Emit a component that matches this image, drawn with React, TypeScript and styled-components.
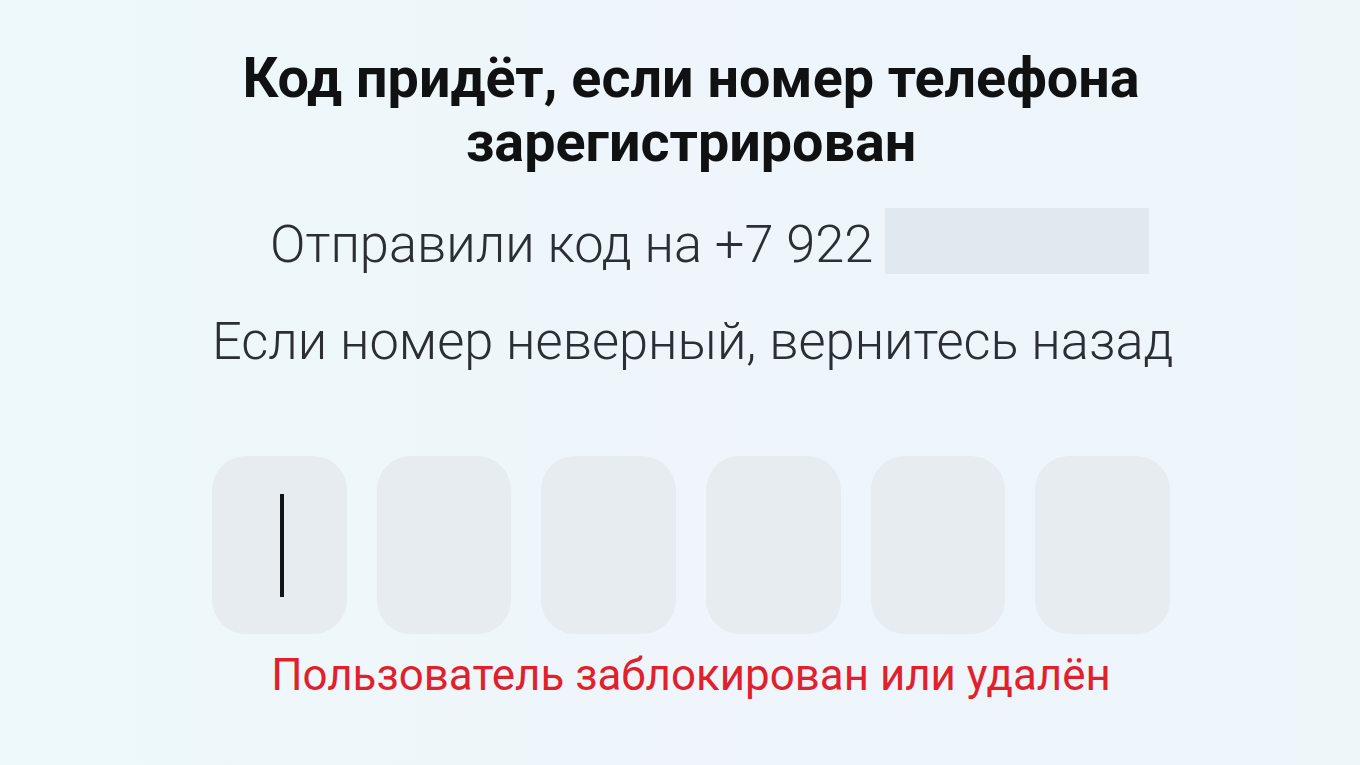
import styled, { createGlobalStyle } from "styled-components";

const GlobalStyle = createGlobalStyle`
  html, body {
    margin: 0;
    padding: 0;
    background: #eef6fa;
  }
  body {
    font-family: Roboto, "Liberation Sans", sans-serif;
  }
`

const Screen = styled.div`
  height: 765px;
  overflow: hidden;
  background: linear-gradient(90deg, #edf9fb 0%, #eff5fa 50%, #eef6fa 100%);
`

const Column = styled.main`
  width: 958px;
  margin-left: 212px;
  padding-top: 46px;
  display: flex;
  flex-direction: column;
  align-items: center;
`

const Title = styled.h1`
  margin: 0;
  font-size: 55.7px;
  line-height: 64px;
  font-weight: 700;
  color: #101112;
  text-align: center;
  white-space: nowrap;
`

const InfoLine = styled.div<{ $top: number; $indent?: number }>`
  align-self: stretch;
  display: flex;
  align-items: flex-start;
  gap: 12px;
  margin-top: ${({$top}) => $top}px;
  padding-left: ${({$indent}) => $indent ?? 0}px;
`

const InfoText = styled.p<{ $shift?: number }>`
  margin: ${({$shift}) => $shift ?? 0}px 0 0;
  font-size: 52.4px;
  line-height: 61px;
  font-weight: 300;
  color: #2b2f34;
  white-space: nowrap;
`

const Hidden = styled.span`
  width: 264px;
  height: 66px;
  background: #e1e9f0;
`

const CodeGrid = styled.div`
  align-self: stretch;
  display: grid;
  grid-template-columns: repeat(6, 1fr);
  gap: 30px;
  margin-top: 84px;
`

const Cell = styled.div`
  height: 178px;
  border-radius: 34px;
  background: #e6ecef;
  display: flex;
  align-items: center;
  justify-content: center;
`

const Caret = styled.span`
  width: 4px;
  height: 103px;
  margin-left: 6px;
  background: #121416;
`

const ErrorText = styled.p`
  margin: 15px 0 0;
  font-size: 43.9px;
  line-height: 53px;
  font-weight: 400;
  color: #e21f2d;
  white-space: nowrap;
`

function App() {
    const cells = [0, 1, 2, 3, 4, 5];
    return (
        <>
            <GlobalStyle/>
            <Screen>
                <Column>
                    <Title>Код придёт, если номер телефона<br/>зарегистрирован</Title>
                    <InfoLine $top={34} $indent={58}>
                        <InfoText $shift={6}>Отправили код на +7 922</InfoText>
                        <Hidden/>
                    </InfoLine>
                    <InfoLine $top={36}>
                        <InfoText>Если номер неверный, вернитесь назад</InfoText>
                    </InfoLine>
                    <CodeGrid>
                        {cells.map(idx =>
                            <Cell key={idx}>{idx === 0 && <Caret/>}</Cell>
                        )}
                    </CodeGrid>
                    <ErrorText>Пользователь заблокирован или удалён</ErrorText>
                </Column>
            </Screen>
        </>
    )
}

export default App;
